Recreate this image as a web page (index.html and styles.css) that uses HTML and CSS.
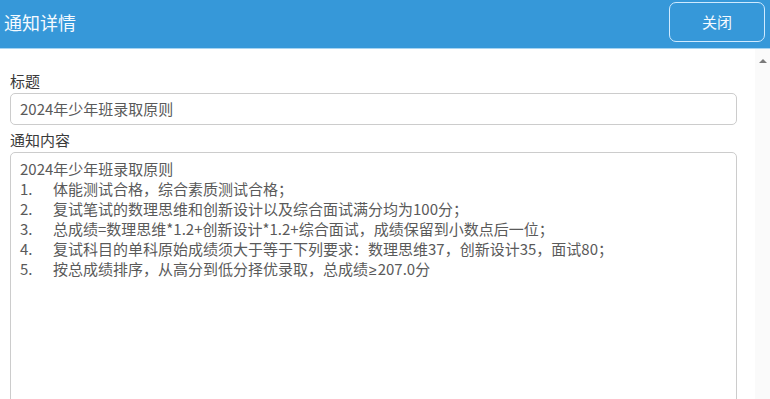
FILE: index.html
```html
<!DOCTYPE html>
<html lang="zh-CN">
<head>
<meta charset="utf-8">
<title>通知详情</title>
<link rel="stylesheet" href="styles.css">
</head>
<body>
<div class="dialog">
  <header class="head">
    <div class="head-title">通知详情</div>
    <button class="btn-close">关闭</button>
  </header>
  <div class="body">
    <main class="content">
      <div class="label label-first">标题</div>
      <div class="input">2024年少年班录取原则</div>
      <div class="label">通知内容</div>
      <div class="textarea">
        <div class="row">2024年少年班录取原则</div>
        <div class="row"><span class="num">1.</span>体能测试合格，综合素质测试合格；</div>
        <div class="row"><span class="num">2.</span>复试笔试的数理思维和创新设计以及综合面试满分均为100分；</div>
        <div class="row"><span class="num">3.</span>总成绩=数理思维*1.2+创新设计*1.2+综合面试，成绩保留到小数点后一位；</div>
        <div class="row"><span class="num">4.</span>复试科目的单科原始成绩须大于等于下列要求：数理思维37，创新设计35，面试80；</div>
        <div class="row"><span class="num">5.</span>按总成绩排序，从高分到低分择优录取，总成绩<span class="sym">≥</span>207.0分</div>
      </div>
    </main>
    <div class="scrollbar">
      <span class="arrow-up"></span>
    </div>
  </div>
</div>
</body>
</html>
```

FILE: styles.css
```css
* { box-sizing: border-box; }
html, body {
  margin: 0;
  padding: 0;
  width: 770px;
  height: 399px;
  overflow: hidden;
  background: #ffffff;
  font-family: "Noto Sans CJK SC", "Noto Sans", sans-serif;
}
.dialog {
  display: flex;
  flex-direction: column;
  height: 399px;
}
.head {
  height: 49px;
  flex: 0 0 49px;
  background: #3698d9;
  border-bottom: 1px solid #a6d4f2;
  display: flex;
  align-items: flex-start;
  justify-content: space-between;
  padding: 0 5px 0 4px;
}
.head-title {
  color: #f4faff;
  font-size: 18px;
  line-height: 24px;
  margin-top: 10px;
}
.btn-close {
  margin-top: 2px;
  width: 96px;
  height: 40px;
  border: 1px solid #cfeaff;
  border-radius: 7px;
  background: #3698d9;
  color: #f4faff;
  font-family: "Noto Sans CJK SC", sans-serif;
  font-size: 15px;
  line-height: 20px;
  padding: 0;
}
.body {
  flex: 1;
  display: flex;
  min-height: 0;
}
.content {
  flex: 1;
  padding: 22px 18px 0 10px;
  overflow: hidden;
}
.label {
  color: #3a3a3a;
  font-size: 15px;
  line-height: 20px;
  margin-top: 5px;
  margin-bottom: 2px;
}
.label-first { margin-top: 0; }
.input {
  height: 32px;
  border: 1px solid #cccccc;
  border-radius: 5px;
  padding: 5px 9px;
  color: #5a5a5a;
  font-size: 15px;
  line-height: 20px;
}
.textarea {
  height: 300px;
  border: 1px solid #cccccc;
  border-radius: 5px;
  padding: 6px 9px;
  color: #5a5a5a;
  font-size: 15px;
  line-height: 20px;
}
.row { white-space: nowrap; }
.num {
  display: inline-block;
  width: 33px;
}
.sym {
  font-family: "Liberation Sans", sans-serif;
  font-size: 14px;
  padding: 0 1px;
}
.scrollbar {
  width: 15px;
  flex: 0 0 15px;
  background: #fafafa;
  display: flex;
  justify-content: center;
  padding-top: 10px;
}
.arrow-up {
  width: 0;
  height: 0;
  border-left: 4px solid transparent;
  border-right: 4px solid transparent;
  border-bottom: 4px solid #7a7a7a;
}
```
